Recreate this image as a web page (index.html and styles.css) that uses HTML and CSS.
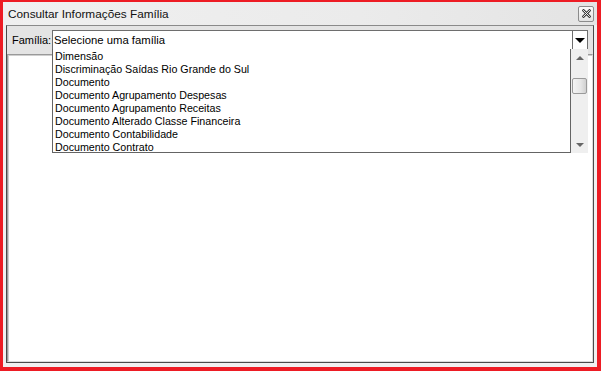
FILE: index.html
```html
<!doctype html>
<html>
<head>
    <meta charset="UTF-8">
    <title>Consultar Informações Família</title>
    <link rel="stylesheet" href="styles.css">
</head>
<body>
    <div class="frame">
        <div class="titlebar">
            <span class="title">Consultar Informações Família</span>
            <button class="close" title="Fechar">
                <svg width="9" height="9" viewBox="0 0 9 9">
                    <path d="M1.5 1.5 L7.5 7.5 M7.5 1.5 L1.5 7.5" stroke="#3c3c3c" stroke-width="2.6" stroke-linecap="square"/>
                    <path d="M1.5 1.5 L7.5 7.5 M7.5 1.5 L1.5 7.5" stroke="#fff" stroke-width="0.9" stroke-linecap="square"/>
                </svg>
            </button>
        </div>

        <div class="panel">
            <div class="toolbar">
                <label class="label">Família:</label>
                <div class="combo">
                    <span class="combo-text">Selecione uma família</span>
                    <span class="combo-button"><span class="arrow-down-big"></span></span>

                    <div class="dropdown">
                        <ul class="items">
                            <li>Dimensão</li>
                            <li>Discriminação Saídas Rio Grande do Sul</li>
                            <li>Documento</li>
                            <li>Documento Agrupamento Despesas</li>
                            <li>Documento Agrupamento Receitas</li>
                            <li>Documento Alterado Classe Financeira</li>
                            <li>Documento Contabilidade</li>
                            <li>Documento Contrato</li>
                        </ul>
                        <div class="scrollbar">
                            <span class="scroll-btn"><span class="arrow-up"></span></span>
                            <div class="track">
                                <span class="thumb"></span>
                            </div>
                            <span class="scroll-btn"><span class="arrow-down"></span></span>
                        </div>
                    </div>
                </div>
            </div>
            <div class="content"></div>
        </div>
    </div>
</body>
</html>
```

FILE: styles.css
```css
html, body {
    margin: 0;
    padding: 0;
}

body {
    font-family: "Liberation Sans", Arial, sans-serif;
    font-size: 11px;
    color: #000;
    user-select: none;
}

.frame {
    width: 601px;
    height: 371px;
    box-sizing: border-box;
    border-style: solid;
    border-color: #ed1c24;
    border-width: 2px 4px 4px 3px;
    background-color: #f0f0f0;
    display: flex;
    flex-direction: column;
}

.titlebar {
    height: 23px;
    display: flex;
    align-items: center;
    justify-content: space-between;
    padding: 0 3px 0 5px;
    background: linear-gradient(to right, #f0f0f0, #ebebeb 60%, #e4e4e4);
}

.title {
    font-size: 11.8px;
    color: #111;
}

.close {
    width: 16px;
    height: 16px;
    padding: 0;
    margin: 0;
    border: 1px solid #8c8c8c;
    border-radius: 2px;
    background: linear-gradient(#fbfbfb, #e2e2e2);
    display: flex;
    align-items: center;
    justify-content: center;
}

.panel {
    flex: 1;
    margin: 0 3px 4px 3px;
    border: 1px solid #4a4a4a;
    border-top-color: #8a8a8a;
    display: flex;
    flex-direction: column;
}

.toolbar {
    height: 28px;
    display: flex;
    align-items: flex-start;
    padding: 4px 5px 0 5px;
    box-sizing: border-box;
    background-color: #e4e4e4;
}

.label {
    width: 40px;
    line-height: 18px;
    padding-top: 1px;
}

.combo {
    position: relative;
    flex: 1;
    height: 20px;
    box-sizing: border-box;
    border: 1px solid #6e6e6e;
    background-color: #fff;
    display: flex;
    align-items: center;
}

.combo-text {
    flex: 1;
    padding-left: 1px;
    font-size: 11.3px;
}

.combo-button {
    width: 14px;
    height: 18px;
    border-left: 1px solid #6e6e6e;
    display: flex;
    align-items: center;
    justify-content: center;
}

.arrow-down-big {
    width: 0;
    height: 0;
    border-left: 5px solid transparent;
    border-right: 5px solid transparent;
    border-top: 5px solid #000;
}

.dropdown {
    position: absolute;
    left: -1px;
    right: -1px;
    top: 18px;
    height: 104px;
    display: flex;
    background-color: #fff;
    z-index: 2;
}

.items {
    flex: 1;
    list-style: none;
    margin: 0;
    padding: 1px 0 0 2px;
    border: 1px solid #646464;
    border-top: 0;
    overflow: hidden;
    font-size: 10.7px;
}

.items li {
    height: 13px;
    line-height: 13px;
    white-space: nowrap;
}

.scrollbar {
    width: 17px;
    display: flex;
    flex-direction: column;
    background-color: #efefef;
}

.scroll-btn {
    height: 17px;
    display: flex;
    align-items: center;
    justify-content: center;
}

.arrow-up {
    width: 0;
    height: 0;
    border-left: 4px solid transparent;
    border-right: 4px solid transparent;
    border-bottom: 4px solid #666;
}

.arrow-down {
    width: 0;
    height: 0;
    border-left: 4px solid transparent;
    border-right: 4px solid transparent;
    border-top: 4px solid #666;
}

.track {
    flex: 1;
    padding: 12px 1px 0 1px;
}

.thumb {
    display: block;
    height: 14px;
    border: 1px solid #9a9a9a;
    border-radius: 2px;
    background: linear-gradient(to right, #f4f4f4, #e6e6e6 60%, #d0d0d0);
}

.content {
    flex: 1;
    margin: 0;
    border: 1px solid;
    border-color: #9a9a9a #dcdcdc #dcdcdc #9a9a9a;
    box-shadow: inset 1px 1px 0 #cfcfcf;
    background-color: #fff;
}
```
